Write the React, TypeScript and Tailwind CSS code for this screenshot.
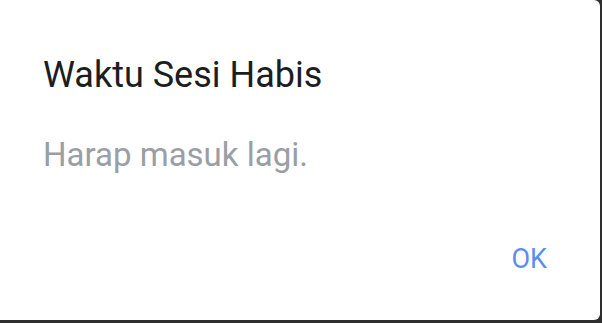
export default function App() {
  return (
    <div className="w-[602px] h-[323px] bg-[#2e2e2e] pr-[2px] pb-[3px] font-['Roboto','Liberation_Sans',sans-serif]">
      <div className="h-full bg-white rounded-r-[6px] flex flex-col pl-[43px] pr-[53px]">
        <h1 className="mt-[55px] text-[36px] leading-[40px] text-[#1b1d21]">Waktu Sesi Habis</h1>
        <p className="mt-[40px] text-[33px] leading-[40px] text-[#9a9ea5]">Harap masuk lagi.</p>
        <div className="mt-auto mb-[46px] flex justify-end">
          <button className="text-[27px] leading-[30px] text-[#5b8def]">OK</button>
        </div>
      </div>
    </div>
  )
}
